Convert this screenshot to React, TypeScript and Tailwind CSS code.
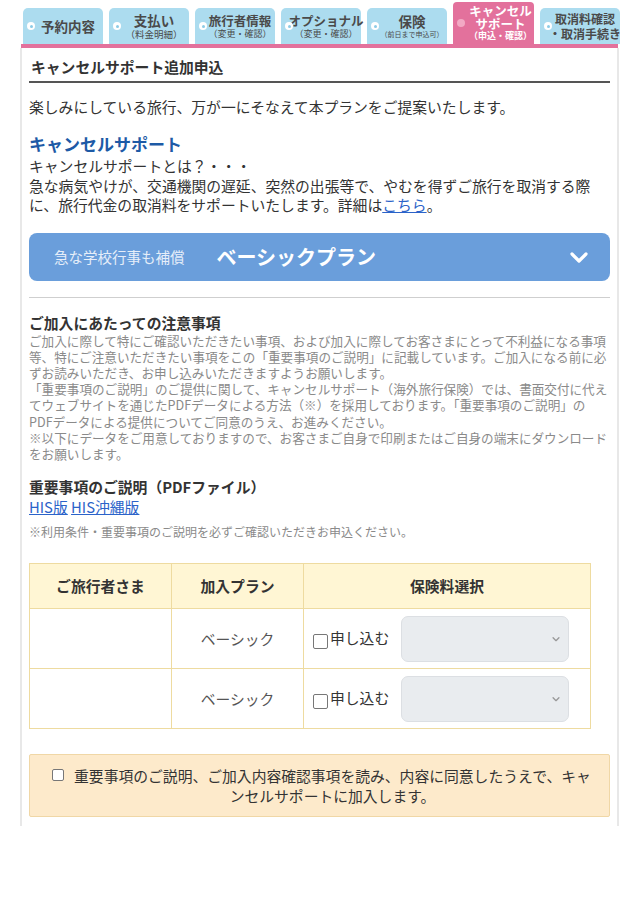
import React from "react";

const font = { fontFamily: '"Noto Sans CJK JP", "Noto Sans", sans-serif' };

function Bullet({ active }: { active?: boolean }) {
  return (
    <span
      className={`absolute left-[4px] top-1/2 -translate-y-1/2 w-[8px] h-[8px] rounded-full flex items-center justify-center ${
        active ? "bg-[#f2a9c4]" : "bg-white"
      }`}
    >
      <span className={`w-[3px] h-[3px] rounded-full ${active ? "bg-[#f2a9c4]" : "bg-[#8ccbe6]"}`} />
    </span>
  );
}

function Tab({ children }: { children: React.ReactNode }) {
  return (
    <div className="relative w-[80px] h-[36px] bg-[#acdcef] rounded-t-[5px] flex flex-col items-center justify-center pl-[10px] text-[#4a4a4a] font-bold">
      <Bullet />
      {children}
    </div>
  );
}

function Chevron({ className }: { className?: string }) {
  return (
    <svg className={className} viewBox="0 0 24 24" fill="none" stroke="currentColor" strokeWidth="3.2" strokeLinecap="round" strokeLinejoin="round">
      <polyline points="5,9 12,16 19,9" />
    </svg>
  );
}

function Row() {
  return (
    <tr className="h-[60px]">
      <td className="border border-[#eedba0]"></td>
      <td className="border border-[#eedba0] text-center text-[#555] text-[14.8px]">ベーシック</td>
      <td className="border border-[#eedba0] px-[8px]">
        <div className="flex items-center">
          <span className="w-[15px] h-[15px] border border-[#777] rounded-[2px] bg-white mt-[6px] ml-[1px]" />
          <span className="text-[14.8px] text-[#333] ml-[2px] -mt-[2px]">申し込む</span>
          <div className="ml-auto mr-[13px] w-[168px] h-[46px] rounded-[7px] bg-[#e9ecef] border border-[#dcdfe3] flex items-center justify-end pr-[7px]">
            <Chevron className="w-[10px] h-[10px] text-[#999]" />
          </div>
        </div>
      </td>
    </tr>
  );
}

export default function App() {
  return (
    <div className="w-[640px] h-[900px] bg-white relative" style={font}>
      {/* tabs */}
      <div className="flex items-end gap-[6px] pl-[23px] h-[44px]">
        <Tab>
          <span className="text-[13.5px] leading-[16px]">予約内容</span>
        </Tab>
        <Tab>
          <span className="text-[13.5px] leading-[15px]">支払い</span>
          <span className="text-[9.5px] leading-[12px] font-normal">（料金明細）</span>
        </Tab>
        <Tab>
          <span className="text-[12.5px] leading-[15px]">旅行者情報</span>
          <span className="text-[9px] leading-[12px] font-normal">（変更・確認）</span>
        </Tab>
        <Tab>
          <span className="text-[12.5px] leading-[15px] whitespace-nowrap">オプショナル</span>
          <span className="text-[9px] leading-[12px] font-normal">（変更・確認）</span>
        </Tab>
        <Tab>
          <span className="text-[13.5px] leading-[16px]">保険</span>
          <span className="text-[7px] leading-[10px] font-normal whitespace-nowrap">（前日まで申込可）</span>
        </Tab>
        <div className="relative w-[81px] h-[42px] bg-[#e3719c] rounded-t-[4px] flex flex-col items-center justify-center pl-[14px] text-white font-bold">
          <Bullet active />
          <span className="text-[12.5px] leading-[13px]">キャンセル</span>
          <span className="text-[12.5px] leading-[13px]">サポート</span>
          <span className="text-[9px] leading-[12px]">（申込・確認）</span>
        </div>
        <Tab>
          <span className="text-[12px] leading-[15px] whitespace-nowrap">取消料確認</span>
          <span className="text-[12px] leading-[15px] whitespace-nowrap">・取消手続き</span>
        </Tab>
      </div>
      <div className="ml-[21px] w-[597px] h-[4px] bg-[#e3719c]" />

      {/* panel */}
      <div className="ml-[20px] w-[599px] h-[778px] border-x-2 border-[#e8e8e8] px-[7px] text-[#333]">
        <div className="pt-[9px] pl-[2px] pb-[4px] text-[14.8px] font-bold leading-[20px] border-b-2 border-[#555]">
          キャンセルサポート追加申込
        </div>
        <p className="mt-[14px] text-[14.8px] leading-[20px]">楽しみにしている旅行、万が一にそなえて本プランをご提案いたします。</p>
        <h2 className="mt-[15px] text-[17px] font-bold text-[#1d5aa6] leading-[24px]">キャンセルサポート</h2>
        <p className="text-[14.8px] leading-[19.5px]">
          キャンセルサポートとは？・・・
          <br />
          急な病気やけが、交通機関の遅延、突然の出張等で、やむを得ずご旅行を取消する際
          <br />
          に、旅行代金の取消料をサポートいたします。詳細は
          <span className="text-[#2b63c9] underline">こちら</span>。
        </p>

        <div className="mt-[18px] h-[48px] rounded-[8px] bg-[#6a9edb] flex items-center pl-[25px] pr-[19px]">
          <span className="text-[14.5px] text-[#e6eef9]">急な学校行事も補償</span>
          <span className="ml-[32px] text-[20px] font-bold text-white">ベーシックプラン</span>
          <Chevron className="ml-auto w-[24px] h-[24px] text-white" />
        </div>

        <div className="mt-[16px] border-t border-[#cfcfcf]" />

        <h3 className="mt-[15px] text-[14.8px] font-bold leading-[20px]">ご加入にあたっての注意事項</h3>
        <p className="text-[12.6px] leading-[16.2px] text-[#8a8a8a] whitespace-nowrap">
          ご加入に際して特にご確認いただきたい事項、および加入に際してお客さまにとって不利益になる事項
          <br />
          等、特にご注意いただきたい事項をこの「重要事項のご説明」に記載しています。ご加入になる前に必
          <br />
          ずお読みいただき、お申し込みいただきますようお願いします。
          <br />
          「重要事項のご説明」のご提供に関して、キャンセルサポート（海外旅行保険）では、書面交付に代え
          <br />
          てウェブサイトを通じたPDFデータによる方法（※）を採用しております。「重要事項のご説明」の
          <br />
          PDFデータによる提供についてご同意のうえ、お進みください。
          <br />
          ※以下にデータをご用意しておりますので、お客さまご自身で印刷またはご自身の端末にダウンロード
          <br />
          をお願いします。
        </p>

        <h3 className="mt-[15px] text-[14.8px] font-bold leading-[20px]">重要事項のご説明（PDFファイル）</h3>
        <div className="text-[14.8px] leading-[19px] text-[#2b63c9]">
          <span className="underline">HIS版</span> <span className="underline">HIS沖縄版</span>
        </div>
        <p className="mt-[8px] text-[12px] leading-[16px] text-[#8a8a8a]">※利用条件・重要事項のご説明を必ずご確認いただきお申込ください。</p>

        <table className="mt-[23px] w-[562px] border-collapse border border-[#eedba0]">
          <thead>
            <tr className="h-[45px] bg-[#fff6d4]">
              <th className="w-[142px] border border-[#eedba0] text-[14.8px] font-bold text-[#333]">ご旅行者さま</th>
              <th className="w-[132px] border border-[#eedba0] text-[14.8px] font-bold text-[#333]">加入プラン</th>
              <th className="border border-[#eedba0] text-[14.8px] font-bold text-[#333]">保険料選択</th>
            </tr>
          </thead>
          <tbody>
            <Row />
            <Row />
          </tbody>
        </table>

        <div className="mt-[25px] h-[63px] bg-[#fdeacb] border border-[#f0d7a6] rounded-[2px] flex items-center justify-center relative">
          <span className="absolute left-[22px] top-[14px] w-[12px] h-[12px] border border-[#777] rounded-[2px] bg-white" />
          <p className="text-center text-[14.8px] leading-[20px] text-[#333] pl-[36px] pr-[10px] whitespace-nowrap">
            重要事項のご説明、ご加入内容確認事項を読み、内容に同意したうえで、キャ
            <br />
            ンセルサポートに加入します。
          </p>
        </div>
      </div>
    </div>
  );
}
